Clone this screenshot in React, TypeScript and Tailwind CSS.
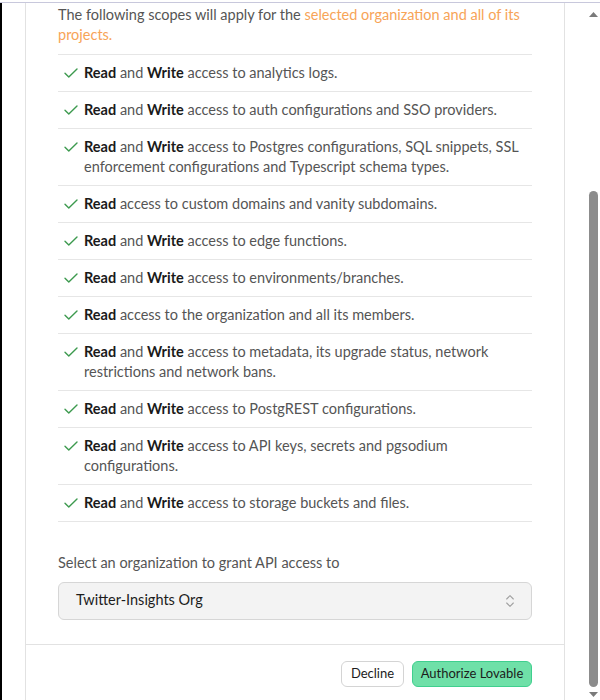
import React from 'react';
import { ChevronsUpDown } from 'lucide-react';

type Scope = {
  write: boolean;
  lines: string[];
};

const scopes: Scope[] = [
  { write: true, lines: ['access to analytics logs.'] },
  { write: true, lines: ['access to auth configurations and SSO providers.'] },
  {
    write: true,
    lines: [
      'access to Postgres configurations, SQL snippets, SSL',
      'enforcement configurations and Typescript schema types.',
    ],
  },
  { write: false, lines: ['access to custom domains and vanity subdomains.'] },
  { write: true, lines: ['access to edge functions.'] },
  { write: true, lines: ['access to environments/branches.'] },
  { write: false, lines: ['access to the organization and all its members.'] },
  {
    write: true,
    lines: [
      'access to metadata, its upgrade status, network',
      'restrictions and network bans.',
    ],
  },
  { write: true, lines: ['access to PostgREST configurations.'] },
  {
    write: true,
    lines: ['access to API keys, secrets and pgsodium', 'configurations.'],
  },
  { write: true, lines: ['access to storage buckets and files.'] },
];

const CheckMark = () => (
  <svg width="14" height="10" viewBox="0 0 14 10" fill="none" className="shrink-0">
    <path d="M1 5.2 L4.8 9 L13 1" stroke="#3d9a4f" strokeWidth="1.4" strokeLinecap="round" strokeLinejoin="round" />
  </svg>
);

const ScopeRow: React.FC<{ scope: Scope }> = ({ scope }) => (
  <li className="flex items-start gap-1.5 pl-1.5 py-2 border-b border-[#e6e6e6]">
    <span className="h-5 flex items-center">
      <CheckMark />
    </span>
    <p className="text-[14.5px] leading-5 text-[#555555]">
      <span className="font-bold text-[#1a1a1a]">Read</span>{' '}
      {scope.write && (
        <>
          and <span className="font-bold text-[#1a1a1a]">Write</span>{' '}
        </>
      )}
      {scope.lines.map((line, i) => (
        <React.Fragment key={i}>
          {i > 0 && <br />}
          {line}
        </React.Fragment>
      ))}
    </p>
  </li>
);

const Scrollbar = () => (
  <div className="flex-1 flex flex-col items-end pr-[2px]">
    <svg width="9" height="5" viewBox="0 0 9 5" className="mt-[9px]">
      <polygon points="4.5,0 9,5 0,5" fill="#7a7a7a" />
    </svg>
    <div className="mt-[174px] h-[496px] w-[9px] rounded-full bg-[#8c8c8c]" />
    <svg width="9" height="5" viewBox="0 0 9 5" className="mt-[5px]">
      <polygon points="0,0 9,0 4.5,5" fill="#7a7a7a" />
    </svg>
  </div>
);

export default function App() {
  return (
    <div className="w-[600px] h-[700px] bg-white overflow-hidden flex flex-col font-['Lato',sans-serif]">
      <div className="h-[2px] shrink-0" />
      <div className="h-px shrink-0 bg-[#c8c8dc]" />
      <div className="flex flex-1 min-h-0">
        <div className="w-[2px] bg-black" />
        <div className="w-[23px]" />
        <div className="w-[540px] border-x border-[#e2e2e2] flex flex-col">
          <div className="px-8 pt-[2px]">
            <div className="text-[14.5px] leading-5 text-[#555555]">
              <div>
                The following scopes will apply for the{' '}
                <span className="text-[#f7a457]">selected organization and all of its</span>
              </div>
              <div className="text-[#f7a457]">projects.</div>
            </div>
            <ul className="mt-[9px] border-t border-[#e6e6e6]">
              {scopes.map((s, i) => (
                <ScopeRow key={i} scope={s} />
              ))}
            </ul>
            <label className="block mt-[31px] mb-[9px] text-[14.5px] leading-5 text-[#555555]">
              Select an organization to grant API access to
            </label>
            <button className="w-full h-[38px] flex items-center justify-between pl-[17px] pr-[13px] rounded-md border border-[#d6d6d6] bg-[#f3f3f3] text-[14.5px] leading-5 text-[#1c1c1c]">
              <span className="-mt-[2px]">Twitter-Insights Org</span>
              <ChevronsUpDown size={16} strokeWidth={1.6} className="text-[#a0a0a0]" />
            </button>
          </div>
          <div className="mt-6 border-t border-[#e2e2e2] px-8 pt-4 flex justify-end gap-2">
            <button className="h-[26px] w-[63px] rounded-md border border-[#d4d4d4] bg-white text-[13px] text-[#1c1c1c]">
              Decline
            </button>
            <button className="h-[26px] w-[120px] rounded-md border border-[#3fcf8e] bg-[#6fe0a8] text-[13px] text-[#1c1c1c]">
              Authorize Lovable
            </button>
          </div>
        </div>
        <Scrollbar />
      </div>
    </div>
  );
}
